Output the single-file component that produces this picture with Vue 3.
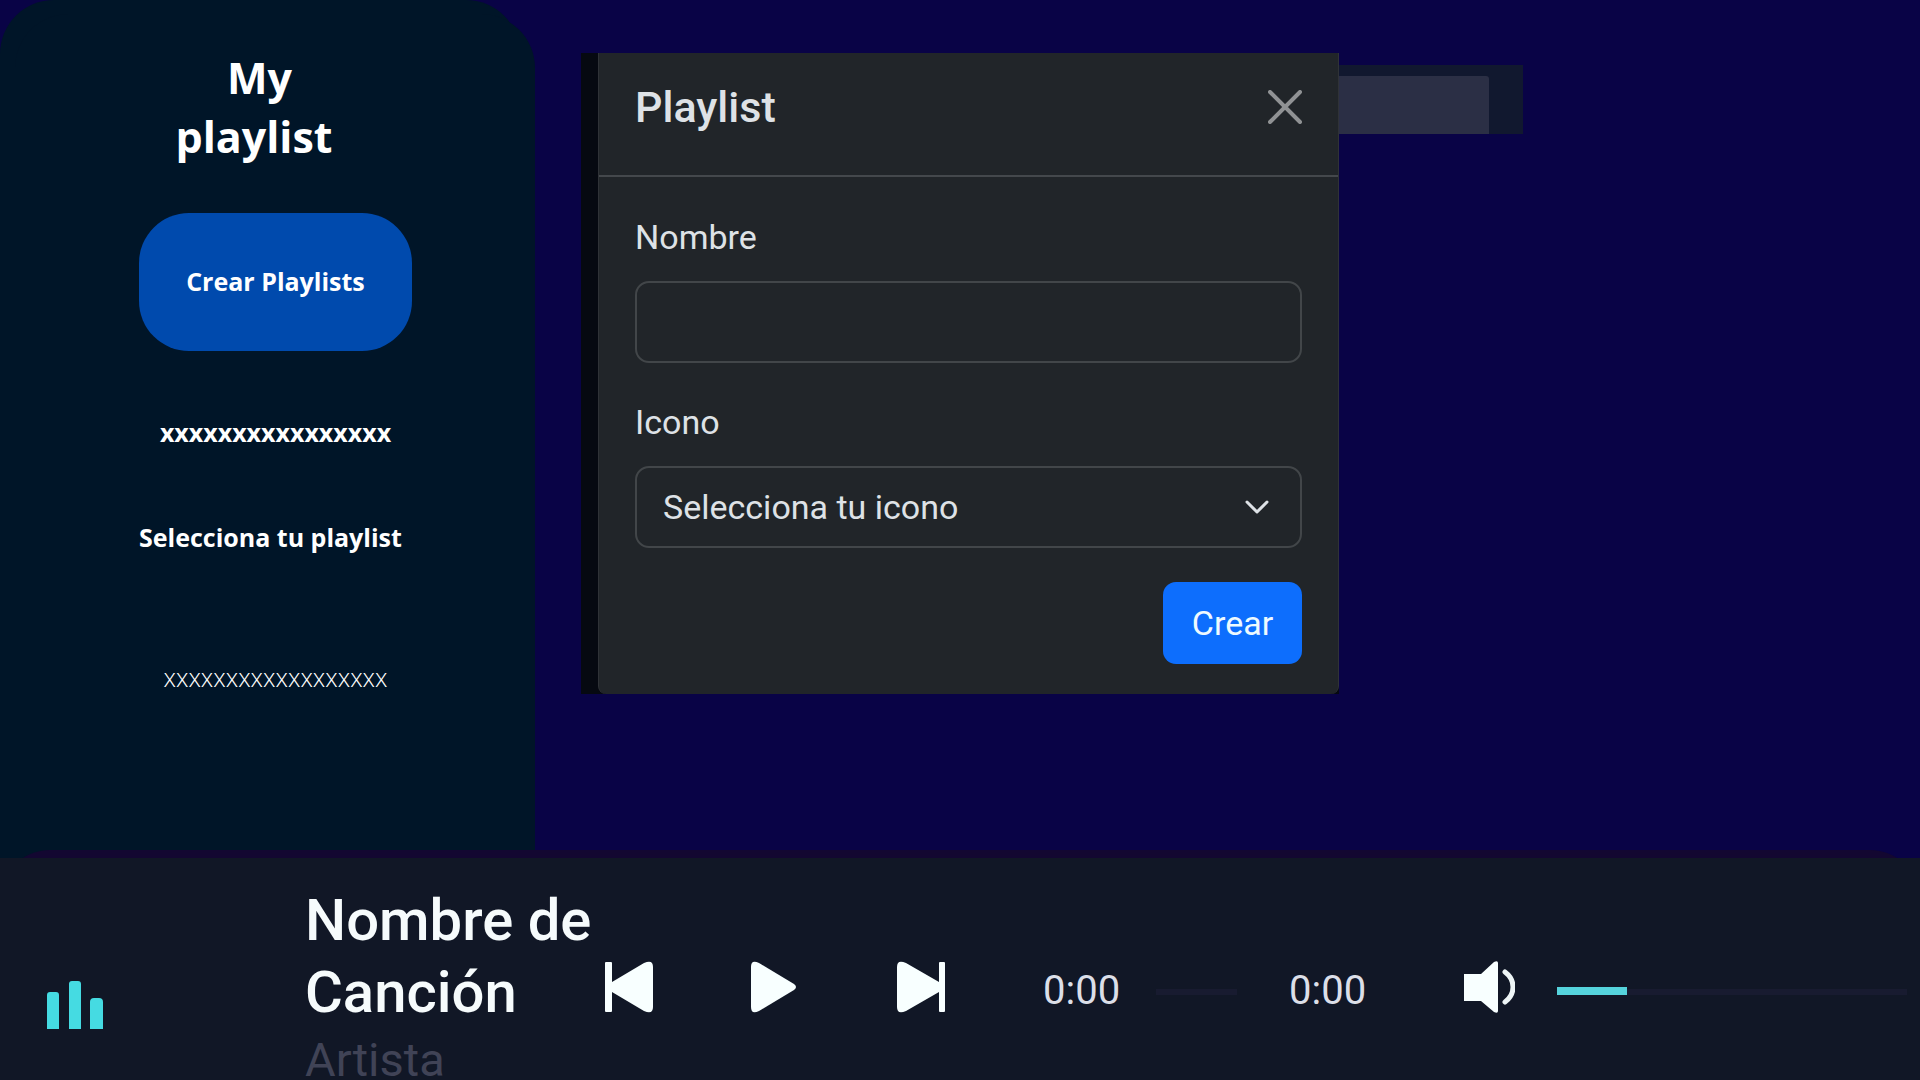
<script setup>
import { ref } from 'vue'

const name = ref('')
const icon = ref('')
const position = ref(0)
const volume = ref(20)
</script>

<template>
  <div class="app">
    <div class="workspace">
      <aside class="sidebar">
        <h1 class="title">&nbsp;My<br />playlist</h1>
        <button type="button" class="create">Crear Playlists</button>
        <p class="entry">xxxxxxxxxxxxxxxx</p>
        <h2 class="subtitle">Selecciona tu playlist</h2>
        <p class="entry light">xxxxxxxxxxxxxxxxxx</p>
      </aside>

      <main class="stage">
        <div class="backdrop">
          <form class="dialog" @submit.prevent>
            <header class="dialog-head">
              <h2>Playlist</h2>
              <button type="button" class="close" aria-label="Cerrar">
                <svg viewBox="0 0 34 34" width="34" height="34">
                  <path d="M2 2 32 32M32 2 2 32" fill="none" stroke="#909294" stroke-width="4" stroke-linecap="round" />
                </svg>
              </button>
            </header>
            <div class="dialog-body">
              <div class="field">
                <label for="name">Nombre</label>
                <input id="name" v-model="name" type="text" class="control" />
              </div>
              <div class="field">
                <label for="icon">Icono</label>
                <div class="select-wrap">
                  <select id="icon" v-model="icon" class="control">
                    <option value="">Selecciona tu icono</option>
                  </select>
                  <svg class="chevron" viewBox="0 0 24 14" width="24" height="14" aria-hidden="true">
                    <path d="M2 2 12 12 22 2" fill="none" stroke="#dee2e6" stroke-width="3" stroke-linecap="round" stroke-linejoin="round" />
                  </svg>
                </div>
              </div>
              <button type="submit" class="submit">Crear</button>
            </div>
          </form>
        </div>
        <div class="banner"><div class="banner-fill"></div></div>
      </main>
    </div>

    <footer class="player">
      <svg class="bars" viewBox="0 0 56 48" width="56" height="48" aria-hidden="true">
        <path d="M0 48V14q0-3 3-3h6q3 0 3 3v34zM22 48V3q0-3 3-3h6q3 0 3 3v45zM43 48V21q0-4 4-4h5q4 0 4 4v27z" fill="#45dbe2" />
      </svg>
      <div class="song">
        <p class="song-name">Nombre de Canción</p>
        <p class="artist">Artista</p>
      </div>
      <div class="controls">
        <div class="transport">
          <button type="button" aria-label="Anterior">
            <svg viewBox="0 0 48 52" width="48" height="52">
              <path d="M0 2q0-1 1-1h5q1 0 1 1v19L39 2q9-4 9 4v40q0 8-9 4L7 31v19q0 1-1 1H1q-1 0-1-1z" fill="#f8ffff" />
            </svg>
          </button>
          <button type="button" aria-label="Reproducir">
            <svg viewBox="0 0 48 52" width="48" height="52">
              <path d="M0 6Q0-2 8 2L43 23q4 3 0 6L8 50q-8 4-8-4z" fill="#f8ffff" />
            </svg>
          </button>
          <button type="button" aria-label="Siguiente">
            <svg viewBox="0 0 48 52" width="48" height="52">
              <path d="M48 2q0-1-1-1h-4q-1 0-1 1v19L9 2Q0-2 0 6v40q0 8 9 4l33-19v19q0 1 1 1h4q1 0 1-1z" fill="#f8ffff" />
            </svg>
          </button>
        </div>
        <div class="progress">
          <span class="time">0:00</span>
          <input v-model="position" type="range" class="range seek" min="0" max="100" aria-label="Posición" :style="{ '--fill': position + '%' }" />
          <span class="time">0:00</span>
        </div>
        <div class="sound">
          <button type="button" aria-label="Silenciar">
            <svg viewBox="0 0 52 52" width="52" height="52">
              <path d="M1 13h17L31 1q4-2 4 1v48q0 3-4 1L18 40H1z" fill="#f8ffff" />
              <path d="M42 11q8 6 8 15t-8 15" fill="none" stroke="#eef5f6" stroke-width="5" stroke-linecap="round" />
            </svg>
          </button>
          <input v-model="volume" type="range" class="range volume" min="0" max="100" aria-label="Volumen" :style="{ '--fill': volume + '%' }" />
        </div>
      </div>
    </footer>
  </div>
</template>

<style>
body {
  margin: 0;
  background: #090346;
}
</style>

<style scoped>
* {
  box-sizing: border-box;
}
h1, h2, p {
  margin: 0;
}
button {
  padding: 0;
  border: 0;
  background: none;
  font-family: inherit;
  cursor: pointer;
}
svg {
  display: block;
}
.app {
  display: flex;
  flex-direction: column;
  min-height: 100vh;
  font-family: Roboto, sans-serif;
}
.workspace {
  display: flex;
  flex: 1;
}

/* Sidebar */
.sidebar {
  position: relative;
  z-index: 0;
  flex: none;
  display: flex;
  flex-direction: column;
  width: 535px;
  padding: 48px 123px 0 139px;
  color: #fff;
  font: 700 25px/34px "Open Sans", "Noto Sans", sans-serif;
}
.sidebar::before,
.sidebar::after {
  content: "";
  position: absolute;
  z-index: -1;
  background: #001528;
}
.sidebar::before {
  inset: 0 15px 0 0;
  border-radius: 54px 54px 0 0;
}
.sidebar::after {
  inset: 14px 0 0 15px;
  border-radius: 54px 54px 0 0;
}
.title {
  width: 230px;
  font-size: 43px;
  line-height: 59px;
  text-align: center;
}
.create {
  height: 138px;
  margin: 47px 0 64px;
  padding-bottom: 2px;
  border-radius: 50px;
  background: #004aad;
  color: #fff;
  font: inherit;
}
.entry {
  text-align: center;
}
.subtitle {
  margin: 71px 0 106px;
  font: inherit;
  white-space: nowrap;
}
.light {
  font-weight: 300;
}

/* Dialog */
.stage {
  display: flex;
  align-items: flex-start;
  flex: 1;
  padding: 53px 46px;
}
.backdrop {
  flex: 0 1 758px;
  padding-left: 17px;
  background: #060911;
}
.dialog {
  border: solid #2f3237;
  border-width: 0 1px;
  border-radius: 0 0 8px 8px;
  background: #212529;
  color: #dee2e6;
  font-size: 34px;
  line-height: 38px;
}
.dialog-head {
  display: flex;
  justify-content: space-between;
  align-items: center;
  padding: 28px 36px 42px;
  border-bottom: 2px solid #44484c;
}
.dialog-head h2 {
  font-size: 43px;
  font-weight: 500;
  line-height: 52px;
}
.dialog-body {
  display: flex;
  flex-direction: column;
  padding: 41px 36px 30px;
}
.field {
  display: flex;
  flex-direction: column;
  gap: 25px;
  margin-bottom: 40px;
}
.field + .field {
  margin-bottom: 34px;
}
.control {
  display: block;
  width: 100%;
  height: 82px;
  padding: 0 26px;
  border: 2px solid #424649;
  border-radius: 14px;
  outline: 0;
  background: #212529;
  color: inherit;
  font: inherit;
  appearance: none;
}
.select-wrap {
  position: relative;
}
.chevron {
  position: absolute;
  top: 34px;
  right: 33px;
  pointer-events: none;
}
.submit {
  align-self: flex-end;
  width: 139px;
  height: 82px;
  border-radius: 13px;
  background: #0d6efd;
  color: #eefaff;
  font-size: 34px;
}
.banner {
  flex: 0 1 184px;
  margin-top: 12px;
  padding: 11px 34px 0 0;
  background: #11182f;
}
.banner-fill {
  height: 58px;
  border-radius: 0 3px 0 0;
  background: #2b2f45;
}

/* Player */
.player {
  position: relative;
  display: flex;
  padding: 26px 13px 0 47px;
  background: #111726;
}
.player::before {
  content: "";
  position: absolute;
  inset: -8px 0 auto;
  height: 50px;
  border-radius: 50px 50px 0 0;
  background: #130731;
  clip-path: inset(0 0 42px 0);
}
.bars {
  flex: none;
  align-self: flex-end;
  margin: 0 202px 51px 0;
}
.song {
  flex: none;
  width: 300px;
}
.song-name {
  color: #f6fbfc;
  font-size: 58px;
  font-weight: 500;
  line-height: 72px;
}
.artist {
  margin-top: 12px;
  color: #404356;
  font-size: 47px;
  line-height: 40px;
}
.controls {
  display: flex;
  flex: 1;
  align-items: center;
  min-width: 0;
  padding-top: 10px;
}
.transport {
  display: flex;
  gap: 98px;
  margin-right: 98px;
}
.progress {
  display: flex;
  align-items: center;
  margin-right: 96px;
}
.time {
  width: 78px;
  padding-top: 8px;
  color: #dcdfe8;
  font-size: 40px;
  line-height: 48px;
}
.range {
  --fill: 0%;
  height: 16px;
  margin: 0;
  background:
    linear-gradient(#55d3dc, #55d3dc) 0 100% / var(--fill) 8px no-repeat,
    linear-gradient(#181b30, #181b30) 0 100% / 100% 6px no-repeat;
  appearance: none;
}
.range::-webkit-slider-thumb {
  width: 8px;
  height: 16px;
  appearance: none;
  opacity: 0;
}
.seek {
  width: 81px;
  margin: 0 52px 0 35px;
}
.sound {
  display: flex;
  flex: 1;
  align-items: center;
  gap: 42px;
}
.volume {
  flex: 1;
  min-width: 0;
}
</style>
